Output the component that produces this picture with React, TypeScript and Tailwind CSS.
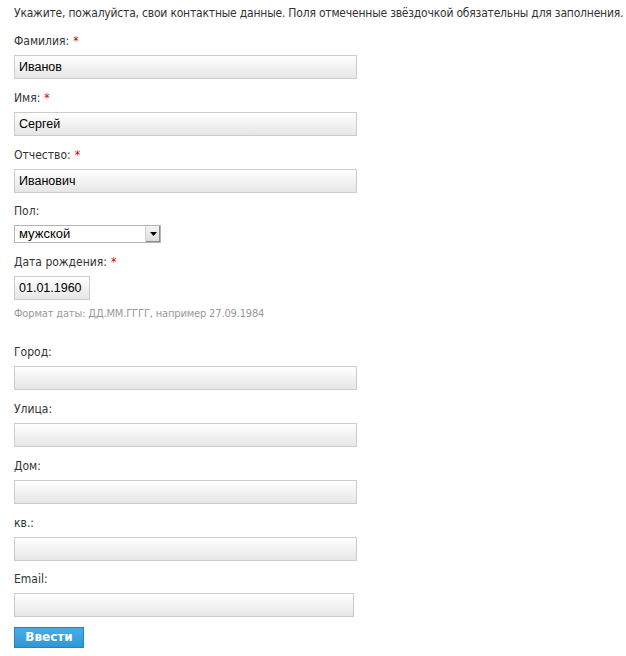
import React from "react";

const labelCls = "block text-[12px] leading-[15px] text-[#333] [font-family:'DejaVu_Sans_Condensed','DejaVu_Sans',Verdana,sans-serif]";
const inputCls =
  "block h-[24px] border border-[#cccccc] bg-gradient-to-b from-[#ffffff] to-[#e6e6e6] px-[4px] text-[12.5px] text-black [font-family:'Liberation_Sans',Arial,sans-serif] outline-none";

function Star() {
  return <span className="text-[#cc0000] ml-[4px]">*</span>;
}

function Field({
  label,
  required,
  value,
  mt,
  width = "w-[343px]",
}: {
  label: string;
  required?: boolean;
  value?: string;
  mt: string;
  width?: string;
}) {
  return (
    <div className={mt}>
      <label className={labelCls}>
        {label}
        {required && <Star />}
      </label>
      <input className={`${inputCls} ${width} mt-[6px]`} defaultValue={value} />
    </div>
  );
}

export default function App() {
  return (
    <div className="w-[626px] h-[656px] bg-white pl-[14px] pt-[6px] overflow-hidden">
      <p className="text-[12px] leading-[15px] tracking-[-0.2px] text-[#333] whitespace-nowrap [font-family:'DejaVu_Sans_Condensed','DejaVu_Sans',Verdana,sans-serif]">
        Укажите, пожалуйста, свои контактные данные. Поля отмеченные звёздочкой обязательны для заполнения.
      </p>
      <Field label="Фамилия:" required value="Иванов" mt="mt-[13px]" />
      <Field label="Имя:" required value="Сергей" mt="mt-[12px]" />
      <Field label="Отчество:" required value="Иванович" mt="mt-[12px]" />
      <div className="mt-[11px]">
        <label className={labelCls}>Пол:</label>
        <div className="mt-[6px] flex h-[18px] w-[147px] items-stretch border border-[#b5b5b5] bg-white">
          <span className="flex-1 pl-[4px] text-[13px] leading-[16px] text-black [font-family:'Liberation_Sans',Arial,sans-serif]">
            мужской
          </span>
          <span className="flex w-[15px] items-center justify-center border-l border-[#d0d0d0] bg-gradient-to-b from-[#f4f4f4] to-[#dcdcdc] shadow-[inset_-1px_-1px_0_#8a8a8a]">
            <svg width="7" height="4" viewBox="0 0 7 4">
              <path d="M0 0h7L3.5 4z" fill="#000" />
            </svg>
          </span>
        </div>
      </div>
      <Field label="Дата рождения:" required value="01.01.1960" mt="mt-[12px]" width="w-[76px]" />
      <p className="mt-[7px] text-[11px] leading-[14px] tracking-[-0.15px] text-[#999] [font-family:'DejaVu_Sans_Condensed','DejaVu_Sans',Verdana,sans-serif]">
        Формат даты: ДД.ММ.ГГГГ, например 27.09.1984
      </p>
      <Field label="Город:" mt="mt-[24px]" />
      <Field label="Улица:" mt="mt-[12px]" />
      <Field label="Дом:" mt="mt-[12px]" />
      <Field label="кв.:" mt="mt-[12px]" />
      <Field label="Email:" mt="mt-[11px]" width="w-[340px]" />
      <button className="mt-[10px] block h-[21px] w-[70px] border border-[#1787c6] bg-gradient-to-b from-[#49ade3] to-[#2f97d6] text-[12px] font-bold text-white [font-family:'DejaVu_Sans','Liberation_Sans',sans-serif] leading-[19px]">
        Ввести
      </button>
    </div>
  );
}
